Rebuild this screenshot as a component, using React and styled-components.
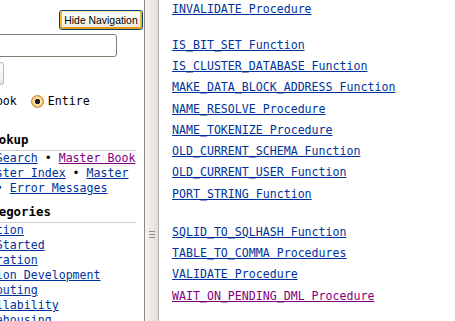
import React from 'react';
import styled, { createGlobalStyle } from 'styled-components';

const GlobalStyle = createGlobalStyle`
  html, body {
    margin: 0;
    padding: 0;
    background: #fff;
  }
  body {
    font-family: "DejaVu Sans Mono", monospace;
    font-size: 11.6px;
    color: #000;
  }
`;

const Page = styled.div`
  display: flex;
  height: 321px;
  overflow: hidden;
`;

/* left navigation frame, scrolled sideways so its left part is cut off */
const Nav = styled.nav`
  width: 144px;
  flex: none;
  overflow: hidden;
  background: #fff;
`;

const NavInner = styled.div`
  margin-left: -67px;
  width: 211px;
`;

const HideRow = styled.div`
  display: flex;
  justify-content: flex-end;
  padding: 10px 1px 0 0;
`;

const HideButton = styled.button`
  width: 84px;
  height: 20px;
  padding: 0;
  font: 10.4px "Liberation Sans", Arial, sans-serif;
  color: #000;
  border: 1px solid #003c74;
  border-radius: 3px;
  background: linear-gradient(#fffffd, #f4f2ea 70%, #e6e2d4);
  box-shadow: inset 0 1px 0 #ffe7a2, inset 2px 0 0 #f8b732, inset -2px 0 0 #f8b732, inset 0 -2px 0 #e59a16;
`;

const SearchInput = styled.input`
  display: block;
  box-sizing: border-box;
  width: 180px;
  height: 23px;
  margin: 4px 0 0 4px;
  border: 1px solid #857b6e;
  border-radius: 3px;
  background: #fff;
`;

const SearchButton = styled.button`
  display: block;
  box-sizing: border-box;
  width: 67px;
  height: 23px;
  margin: 5px 0 0 4px;
  border: 1px solid #b9b6ae;
  border-radius: 3px;
  background: linear-gradient(#fefefe, #f0efea 80%, #e2e0d8);
`;

const RadioRow = styled.div`
  display: flex;
  align-items: center;
  height: 15px;
  line-height: 15px;
  margin-top: 8.5px;
  padding-left: 4px;
`;

const RadioOption = styled.label`
  display: flex;
  align-items: center;
  gap: 4px;
  margin-right: 14px;
`;

const Radio = styled.span`
  width: 13px;
  height: 13px;
  box-sizing: border-box;
  border-radius: 50%;
  border: 1px solid ${p => (p.$checked ? '#c4862a' : '#1c5180')};
  background: ${p =>
    p.$checked
      ? 'radial-gradient(circle, #1e1e1e 0 2.4px, #fbe6c0 3px 3.6px, #f6c470 4.6px)'
      : 'linear-gradient(135deg, #dcdad3, #fff)'};
`;

const Heading = styled.h2`
  margin: ${p => p.$top}px 8px 0 0;
  padding: 0 0 2px 6px;
  font-size: 12.4px;
  line-height: 16px;
  font-weight: bold;
  border-bottom: 1px solid #cfcfcf;
  white-space: nowrap;
`;

const Quick = styled.p`
  margin: 0;
  line-height: 15px;
`;

const Link = styled.a`
  color: ${p => (p.$visited ? '#800080' : '#003399')};
  text-decoration: underline;
`;

const CategoryList = styled.ul`
  list-style: none;
  margin: 0;
  padding: 0 0 0 7px;
  line-height: 15px;
  white-space: nowrap;
`;

/* frame splitter */
const Splitter = styled.div`
  width: 15px;
  flex: none;
  box-sizing: border-box;
  border-left: 1px solid #8c8a86;
  border-right: 1px solid #b2b0ac;
  background: linear-gradient(to right, #f5f4f0, #ebe8e2 60%, #e2ded6);
  display: flex;
  flex-direction: column;
  align-items: center;
`;

const Grip = styled.span`
  width: 6px;
  height: 7px;
  margin-top: 231px;
  background: repeating-linear-gradient(#8e8c88 0 1px, transparent 1px 3px);
`;

const Content = styled.main`
  flex: 1;
  padding-left: 13px;
  background: #fff;
  overflow: hidden;
`;

const Index = styled.div`
  margin-top: -1.5px;
`;

const Group = styled.div`
  margin-top: ${p => p.$gap}px;
`;

const Entry = styled.div`
  line-height: 21.25px;
  white-space: nowrap;
`;

const groups = [
  { gap: 0, items: ['INVALIDATE Procedure'] },
  {
    gap: 15,
    items: [
      'IS_BIT_SET Function',
      'IS_CLUSTER_DATABASE Function',
      'MAKE_DATA_BLOCK_ADDRESS Function',
      'NAME_RESOLVE Procedure',
      'NAME_TOKENIZE Procedure',
      'OLD_CURRENT_SCHEMA Function',
      'OLD_CURRENT_USER Function',
      'PORT_STRING Function',
    ],
  },
  {
    gap: 17,
    items: [
      'SQLID_TO_SQLHASH Function',
      'TABLE_TO_COMMA Procedures',
      'VALIDATE Procedure',
      'WAIT_ON_PENDING_DML Procedure',
    ],
  },
];

const visited = ['WAIT_ON_PENDING_DML Procedure'];

const categories = [
  'Installation',
  'Getting Started',
  'Administration',
  'Application Development',
  'Grid Computing',
  'High Availability',
  'Data Warehousing',
];

export default function App() {
  return (
    <>
      <GlobalStyle />
      <Page>
        <Nav>
          <NavInner>
            <HideRow>
              <HideButton>Hide Navigation</HideButton>
            </HideRow>
            <SearchInput type="text" />
            <SearchButton>Go</SearchButton>
            <RadioRow>
              <RadioOption>
                <Radio />
                This Book
              </RadioOption>
              <RadioOption>
                <Radio $checked />
                Entire
              </RadioOption>
            </RadioRow>

            <Heading $top={23.5}>Quick Lookup</Heading>
            <Quick>
              <Link href="#">Advanced Search</Link> • <Link href="#" $visited>Master Book</Link>{' '}
              <Link href="#">List</Link> • <Link href="#">Master Index</Link> •{' '}
              <Link href="#">Master Glossary</Link> • <Link href="#">Error Messages</Link>
            </Quick>

            <Heading $top={8}>Book Categories</Heading>
            <CategoryList>
              {categories.map(c => (
                <li key={c}>
                  <Link href="#">{c}</Link>
                </li>
              ))}
            </CategoryList>
          </NavInner>
        </Nav>

        <Splitter>
          <Grip />
        </Splitter>

        <Content>
          <Index>
            {groups.map((g, i) => (
              <Group key={i} $gap={g.gap}>
                {g.items.map(item => (
                  <Entry key={item}>
                    <Link href="#" $visited={visited.includes(item)}>
                      {item}
                    </Link>
                  </Entry>
                ))}
              </Group>
            ))}
          </Index>
        </Content>
      </Page>
    </>
  );
}
